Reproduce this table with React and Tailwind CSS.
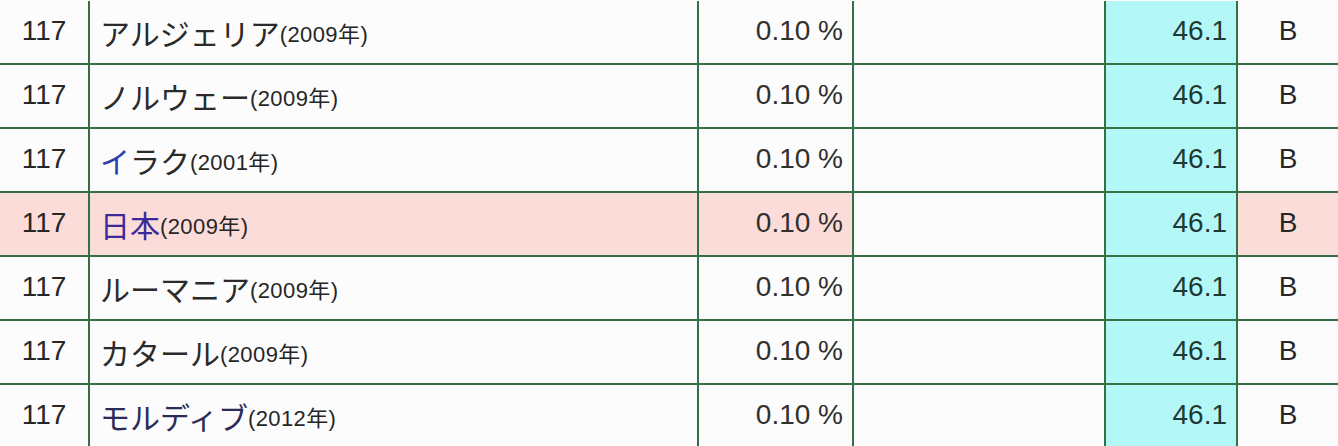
const rows = [
    { name: [{ t: "アルジェリア", c: "text-[#2a2a2a]" }], year: "2009" },
    { name: [{ t: "ノルウェー", c: "text-[#2a2a2a]" }], year: "2009" },
    { name: [{ t: "イ", c: "text-[#2f3fae]" }, { t: "ラク", c: "text-[#2a2a2a]" }], year: "2001" },
    { name: [{ t: "日本", c: "text-[#3a2a9c]" }], year: "2009", pink: true },
    { name: [{ t: "ルーマニア", c: "text-[#2a2a2a]" }], year: "2009" },
    { name: [{ t: "カタール", c: "text-[#2a2a2a]" }], year: "2009" },
    { name: [{ t: "モルディブ", c: "text-[#2b2b58]" }], year: "2012" },
];

export default function App() {

    return (

        <div className="w-[1338px] h-[446px] overflow-hidden bg-[#fcfcfc] pt-[1px] font-['Liberation_Sans','Noto_Sans_CJK_JP',sans-serif] text-[#262626]">

            {rows.map((row, i) => {

                const cellBg = row.pink ? "bg-[#fcdcd8]" : "bg-[#fcfcfc]";

                return (

                    <div
                        key={i}
                        className="flex h-[64px] border-b-2 border-[#356f46]"
                    >

                        {/* rank */}
                        <div className={`w-[90px] shrink-0 flex items-center justify-center pb-[2px] border-r-2 border-[#356f46] text-[28px] ${cellBg}`}>
                            117
                        </div>

                        {/* country */}
                        <div className={`w-[609px] shrink-0 flex items-center pl-[10px] border-r-2 border-[#356f46] ${cellBg}`}>
                            <span className="font-['Noto_Sans_CJK_JP',sans-serif] text-[30px] leading-none">
                                {row.name.map((part, j) => (
                                    <span key={j} className={part.c}>{part.t}</span>
                                ))}
                            </span>
                            <span className="text-[22px] tracking-[0.4px] leading-none mt-[5px] text-[#262626]">
                                ({row.year}年)
                            </span>
                        </div>

                        {/* share */}
                        <div className={`w-[155px] shrink-0 flex items-center justify-end pr-[9px] pb-[2px] border-r-2 border-[#356f46] text-[28px] text-[#303030] ${cellBg}`}>
                            0.10 %
                        </div>

                        {/* empty */}
                        <div className="w-[252px] shrink-0 border-r-2 border-[#356f46] bg-[#fcfcfc]"></div>

                        {/* value */}
                        <div className="w-[132px] shrink-0 flex items-center justify-end pr-[9px] pb-[2px] border-r-2 border-[#356f46] bg-[#b3f8f6] text-[28px] text-[#1f3a36]">
                            46.1
                        </div>

                        {/* grade */}
                        <div className={`flex-1 flex items-center justify-center pb-[2px] text-[28px] ${cellBg}`}>
                            B
                        </div>

                    </div>
                );
            })}

        </div>
    );
}
